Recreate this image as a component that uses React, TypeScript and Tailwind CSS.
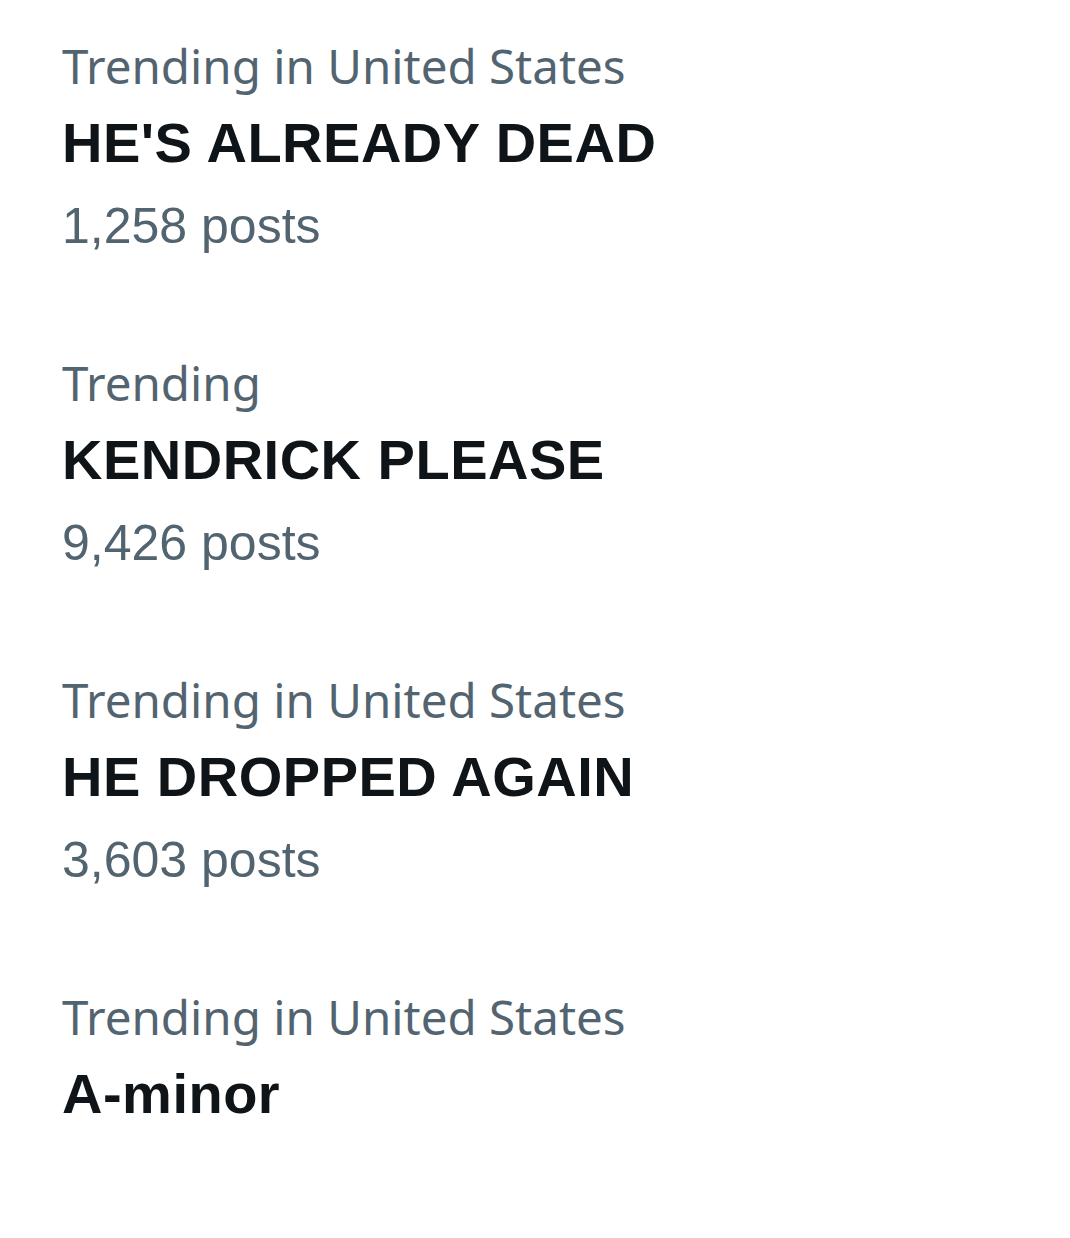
const trends = [
  { where: "Trending in United States", name: "HE'S ALREADY DEAD", posts: "1,258 posts" },
  { where: "Trending", name: "KENDRICK PLEASE", posts: "9,426 posts" },
  { where: "Trending in United States", name: "HE DROPPED AGAIN", posts: "3,603 posts" },
  { where: "Trending in United States", name: "A-minor" },
]

const TrendItem = ({ where, name, posts }: { where: string; name: string; posts?: string }) => {
  return <div className="flex flex-col">
    <div className="h-[47px] text-[47.5px] leading-[47px] text-[#536471] font-['Noto_Sans',sans-serif] whitespace-nowrap">
      {where}
    </div>
    <div className="mt-[26px] h-[56px] text-[56px] leading-[56px] font-bold tracking-[0.5px] text-[#0f1419] font-['Liberation_Sans',Arial,sans-serif] whitespace-nowrap">
      {name}
    </div>
    {posts && <div className="mt-[30px] h-[50px] text-[50px] leading-[50px] text-[#536471] font-['Liberation_Sans',Arial,sans-serif] whitespace-nowrap">
      {posts}
    </div>}
  </div>
}

export default function App() {
  return <div className="w-[1070px] h-[1238px] bg-white pl-[62px] pt-[42px] flex flex-col gap-[108px]">
    {trends.map((t, i) => <TrendItem key={i} {...t} />)}
  </div>
}
